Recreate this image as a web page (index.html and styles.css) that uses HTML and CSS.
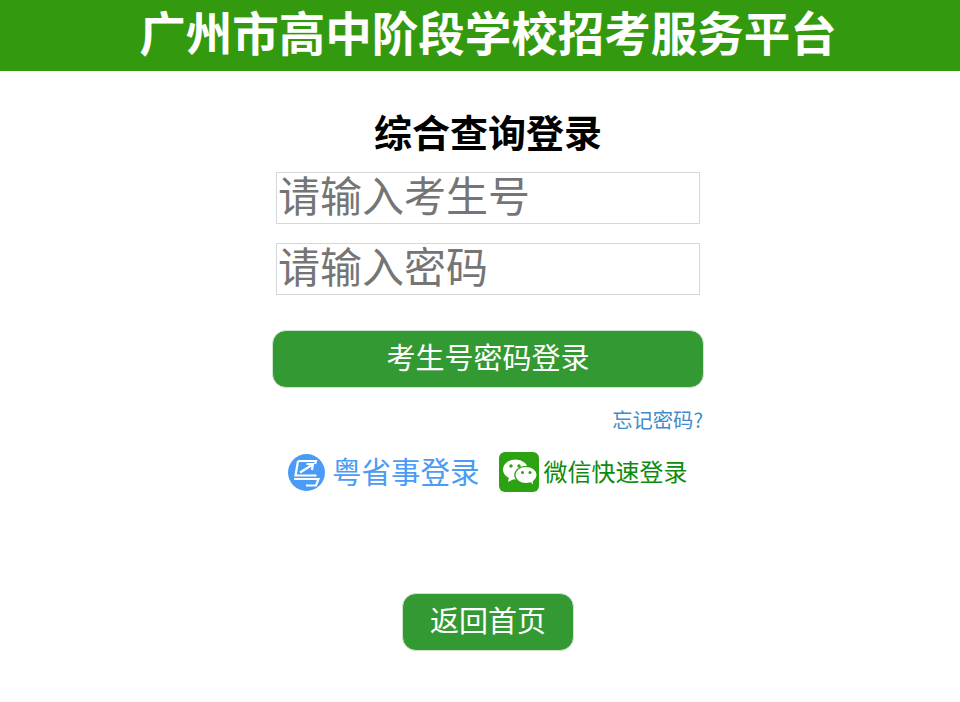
FILE: index.html
```html
<!DOCTYPE html>
<html lang="zh-CN">
<head>
	<meta charset="UTF-8">
	<title>广州市高中阶段学校招考服务平台</title>
	<link rel="stylesheet" href="styles.css">
</head>
<body>
	<header class="top-bar">广州市高中阶段学校招考服务平台</header>
	<main class="login">
		<h1 class="login-title">综合查询登录</h1>
		<input class="login-input" type="text" placeholder="请输入考生号">
		<input class="login-input" type="password" placeholder="请输入密码">
		<a class="green-btn submit-btn" href="#">考生号密码登录</a>
		<a class="forget" href="#">忘记密码?</a>
		<div class="quick">
			<a class="quick-item yss" href="#">
				<svg class="yss-icon" viewBox="0 0 37 37" width="37" height="37">
					<circle cx="18.500" cy="18.500" r="18.500" fill="#4a9bf5"/>
					<path d="M10 7h18l-1 3M10 7l-2.500 14.500h21" fill="none" stroke="#fff" stroke-width="2.200"/>
					<path d="M12 18.500l12-7.500M18.500 10l6.500 0-1 6" fill="none" stroke="#fff" stroke-width="2.200"/>
					<path d="M6 25h24.500l-2.500 6.500h-10" fill="none" stroke="#fff" stroke-width="2.200"/>
				</svg>
				<span>粤省事登录</span>
			</a>
			<a class="quick-item wx" href="#">
				<svg class="wx-icon" viewBox="0 0 40 40" width="40" height="40">
					<rect width="40" height="40" rx="6" fill="#2ca111"/>
					<ellipse cx="16.500" cy="17.500" rx="12.500" ry="10" fill="#fff"/>
					<path d="M10 25l-1 5 6-3z" fill="#fff"/>
					<ellipse cx="27" cy="23" rx="11.800" ry="9.200" fill="#2ca111"/>
					<ellipse cx="27" cy="23" rx="10.500" ry="8" fill="#fff"/>
					<path d="M31 29l3 3.500-.4-5z" fill="#fff"/>
					<circle cx="12" cy="14" r="1.700" fill="#2ca111"/>
					<circle cx="20" cy="14" r="1.700" fill="#2ca111"/>
					<circle cx="23.500" cy="20.500" r="1.500" fill="#2ca111"/>
					<circle cx="31" cy="20.500" r="1.500" fill="#2ca111"/>
				</svg>
				<span>微信快速登录</span>
			</a>
		</div>
		<a class="green-btn back-btn" href="#">返回首页</a>
	</main>
</body>
</html>
```

FILE: styles.css
```css
*{margin:0;padding:0;box-sizing:border-box}
html{overflow-x:hidden}
body{
	width:976px;
	background:#fff;
	font-family:"Liberation Sans","Noto Sans CJK SC",sans-serif;
}
a{text-decoration:none}
.top-bar{
	height:71px;
	background:#339a0f;
	color:#fff;
	font-size:46.500px;
	font-weight:bold;
	line-height:71px;
	text-align:center;
}
.login{
	width:432px;
	margin:0 auto;
	padding-top:40px;
	display:flex;
	flex-direction:column;
	align-items:center;
}
.login-title{
	font-size:38px;
	line-height:46px;
	font-weight:bold;
	color:#000;
	margin-bottom:15px;
}
.login-input{
	display:block;
	width:424px;
	height:52px;
	border:1px solid #d3d7da;
	padding:0 1px;
	font-family:inherit;
	font-size:42px;
	margin-bottom:19px;
	outline:none;
}
.login-input::placeholder{color:#757575;opacity:1}
.green-btn{
	display:block;
	background:#339933;
	border:1px solid #cfe3cf;
	border-radius:14px;
	color:#fff;
	font-size:29px;
	height:58px;
	line-height:57px;
	text-align:center;
}
.submit-btn{
	width:100%;
	margin-top:16px;
}
.forget{
	align-self:flex-end;
	margin-top:20px;
	padding-right:1px;
	font-family:"Noto Sans CJK SC",sans-serif;
	font-size:20.300px;
	line-height:22px;
	color:#428bca;
}
.quick{
	display:flex;
	align-items:center;
	height:40px;
	margin-top:22px;
	padding-left:16px;
	align-self:flex-start;
}
.quick-item{
	display:flex;
	align-items:center;
}
.quick-item span{line-height:32px;padding-top:2px}
.yss{color:#4a9bf5;font-size:29.500px;margin-right:19px}
.yss-icon{margin-right:7px}
.wx{color:#0d8a0d;font-size:24px}
.wx-icon{margin-right:5px}
.back-btn{
	width:172px;
	margin-top:101px;
}
```
